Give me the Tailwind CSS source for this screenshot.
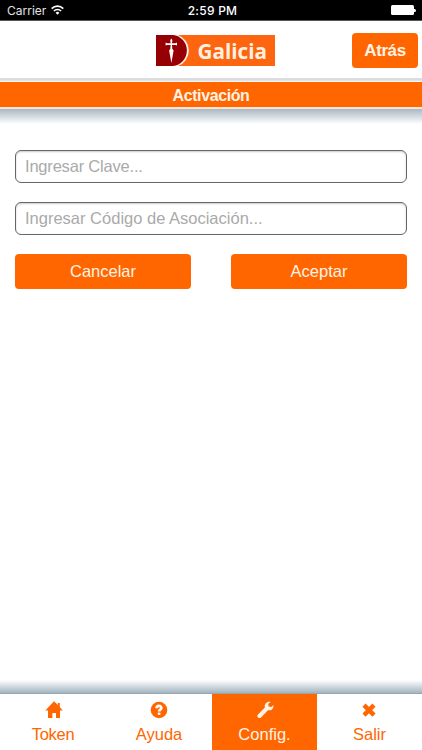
<!DOCTYPE html>
<html lang="es">

<head>
    <meta charset="UTF-8">
    <meta name="viewport" content="width=device-width, initial-scale=1.0">
    <title>Galicia - Activación</title>
    <script src="https://cdn.jsdelivr.net/npm/@tailwindcss/browser@4"></script>
</head>

<body class="bg-white">
    <div class="w-[422px] h-[750px] flex flex-col overflow-hidden font-['Liberation_Sans',Arial,sans-serif]">
        <!-- status bar -->
        <div class="h-[21px] shrink-0 bg-black border-b border-[#555] grid grid-cols-3 items-center text-white text-xs font-['Inter',sans-serif]">
            <div class="flex items-center gap-[5px] pl-[7px] pt-[2px]">
                <span class="text-[#e4e4e4]">Carrier</span>
                <svg class="w-[13px] h-[10px] mb-[2px]" viewBox="0 0 13 10" fill="none" stroke="#fff" stroke-width="1.7">
                    <path d="M.7 3.6a8.2 8.2 0 0 1 11.6 0" />
                    <path d="M2.9 6a5.1 5.1 0 0 1 7.2 0" />
                    <path d="M6.5 9.8 4.6 7.8a2.7 2.7 0 0 1 3.8 0z" fill="#fff" stroke="none" />
                </svg>
            </div>
            <span class="text-center pt-[2px] pl-[3px] font-medium tracking-[0.25px]">2:59 PM</span>
            <div class="flex items-center justify-end pr-[6px]">
                <span class="w-[23px] h-[10px] bg-white rounded-[1.5px]"></span>
                <span class="w-[2px] h-[3px] bg-white rounded-r-full"></span>
            </div>
        </div>

        <!-- header -->
        <header class="h-[57px] shrink-0 grid grid-cols-[1fr_119px_1fr] pl-[9px]">
            <svg class="col-start-2 w-[119px] h-[31px] mt-[14px]" viewBox="0 0 119 31">
                <rect width="119" height="31" fill="#fd6510" />
                <path d="M0 0H22A16.5 16.5 0 0 1 22 31H0z" fill="#fff3e8" />
                <path d="M0 0H17A15.6 15.6 0 0 1 17 31H0z" fill="#960005" />
                <path d="M15.3 3.6 16.4 5.2 16 8.3H19.6L21 7.6V10.6L19.6 9.9H16L16.3 14 17.6 15.5 15.4 28 13.1 15.5 14.3 14 14.6 9.9H11L9.6 10.6V7.6L11 8.3H14.6L14.2 5.2z" fill="#fff" />
                <text x="41.5" y="24" textLength="69.5" lengthAdjust="spacingAndGlyphs" class="font-['Open_Sans',sans-serif] font-bold text-[22px]" fill="#fff0e0">Galicia</text>
            </svg>
            <button class="justify-self-end w-[66px] h-[35px] mt-3 mr-1 rounded-[4px] bg-[#ff6600] text-[#fff3e6] text-[17px] font-bold tracking-[-0.4px]">Atrás</button>
        </header>
        <div class="h-1 shrink-0 bg-linear-to-b from-[#dcdcdf] from-50% to-white"></div>
        <h1 class="h-[25px] shrink-0 bg-[#ff6600] text-[#fff3e6] text-base leading-[28px] font-bold text-center tracking-[-0.4px]">Activación</h1>
        <div class="h-[2px] shrink-0 bg-[#fde3d2]"></div>
        <div class="h-[15px] shrink-0 bg-linear-to-b from-[#a9b8c2] to-white"></div>

        <main class="grow px-[15px] pt-[26px]">
            <div class="flex flex-col gap-[19px]">
                <input type="text" placeholder="Ingresar Clave..."
                    class="w-[392px] h-[33px] px-[9px] rounded-[6px] border border-[#666] shadow-[inset_0_1px_2px_#ccc] text-[16.5px] tracking-[-0.2px] placeholder:text-[#aaa]">
                <input type="text" placeholder="Ingresar Código de Asociación..."
                    class="w-[392px] h-[33px] px-[9px] rounded-[6px] border border-[#666] shadow-[inset_0_1px_2px_#ccc] text-[16.5px] placeholder:text-[#aaa]">
            </div>
            <div class="flex justify-between w-[392px] mt-[19px] text-[16.5px] text-[#fff3e6]">
                <button class="w-[176px] h-[35px] rounded-[4px] bg-[#ff6600]">Cancelar</button>
                <button class="w-[176px] h-[35px] rounded-[4px] bg-[#ff6600]">Aceptar</button>
            </div>
        </main>

        <!-- tab bar -->
        <div class="h-[14px] shrink-0 bg-linear-to-t from-[#a3b5c1] to-white border-b border-[#9aa5ab]"></div>
        <nav class="h-14 shrink-0 grid grid-cols-[106px_106px_105px_105px] text-[16.5px] leading-5 text-[#ff6600]">
            <a class="flex flex-col items-center pt-[7px] gap-[5px]">
                <svg class="w-[18px] h-[18px] ml-[2px]" viewBox="0 0 18 18" fill="currentColor">
                    <path d="M9 .3 12.8 4V2h2v4l2.9 3.4H15V17h-4v-5H7.4v5H3V9.4H.3z" />
                </svg>
                <span class="tracking-[-0.3px]">Token</span>
            </a>
            <a class="flex flex-col items-center pt-[7px] gap-[5px]">
                <svg class="w-[18px] h-[18px]" viewBox="0 0 18 18">
                    <circle cx="9" cy="9" r="8.3" fill="currentColor" />
                    <path d="M6.6 7.2C6.6 4 11.5 4.2 11.4 7 11.3 8.9 9.1 8.5 9.1 10.6" fill="none" stroke="#fff" stroke-width="2.6" />
                    <path d="M7.8 11.6h2.6v2.2H7.8z" fill="#fff" />
                </svg>
                <span>Ayuda</span>
            </a>
            <a class="flex flex-col items-center pt-[7px] gap-[5px] bg-[#ff6600] text-[#fff3e6]">
                <svg class="w-[18px] h-[18px]" viewBox="0 0 18 18" fill="currentColor">
                    <path d="M14.6.9 12.2 3l.4 2.6 2.8.4L17.4 3.9c.6 3.7-2.2 6.1-5.4 5.3L5 16.4c-2 2-5-1-3-3L8.9 6.5C8 3.1 11 .1 14.6.9z" />
                </svg>
                <span>Config.</span>
            </a>
            <a class="flex flex-col items-center pt-[7px] gap-[5px]">
                <svg class="w-[18px] h-[18px] mr-[2px]" viewBox="0 0 18 18" fill="none" stroke="currentColor" stroke-width="4.4">
                    <path d="M4 4.1 14 14.1M14 4.1 4 14.1" />
                </svg>
                <span>Salir</span>
            </a>
        </nav>
    </div>
</body>

</html>
